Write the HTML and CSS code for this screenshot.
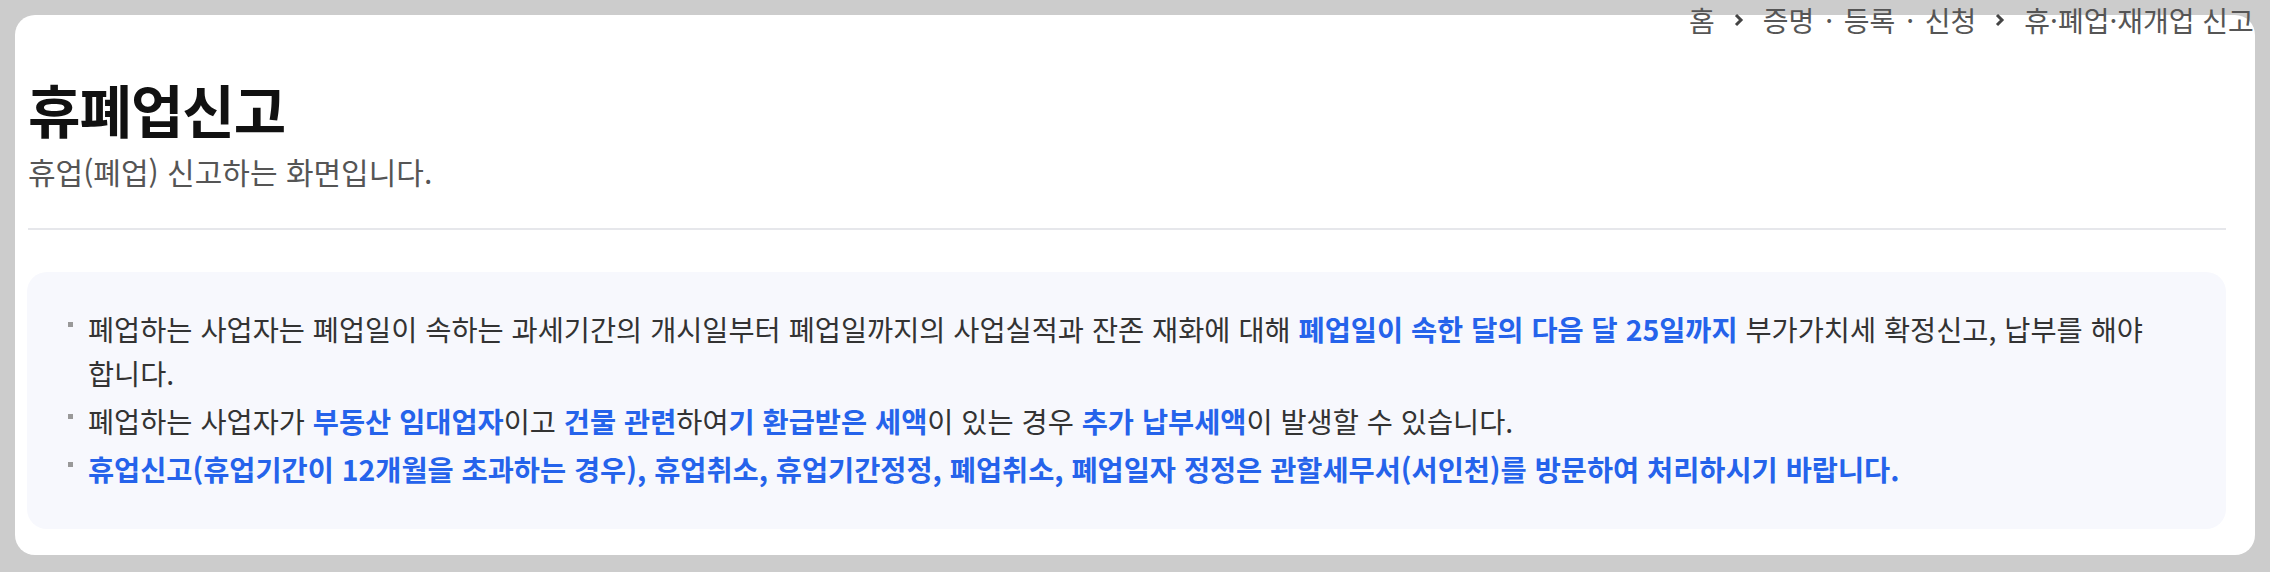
FILE: index.html
```html
<!DOCTYPE html>
<html lang="ko">
<head>
<meta charset="utf-8">
<title>휴폐업신고</title>
<link rel="stylesheet" href="styles.css">
</head>
<body>
<div class="page">
  <section class="card">
    <nav class="breadcrumb">
      <span class="crumb">홈</span>
      <svg class="chev" viewBox="0 0 10 14" width="10" height="14"><polyline points="2,2 7,7 2,12" fill="none" stroke="#444" stroke-width="3"/></svg>
      <span class="crumb crumb-spaced">증명 · 등록 · 신청</span>
      <svg class="chev" viewBox="0 0 10 14" width="10" height="14"><polyline points="2,2 7,7 2,12" fill="none" stroke="#444" stroke-width="3"/></svg>
      <span class="crumb">휴·폐업·재개업 신고</span>
      <svg class="chev" viewBox="0 0 10 14" width="10" height="14"><polyline points="2,2 7,7 2,12" fill="none" stroke="#444" stroke-width="3"/></svg>
    </nav>
    <header class="head">
      <h1 class="title">휴폐업신고</h1>
      <p class="subtitle">휴업(폐업) 신고하는 화면입니다.</p>
    </header>
    <hr class="divider">
    <div class="notice">
      <ul class="notice-list">
        <li>폐업하는 사업자는 폐업일이 속하는 과세기간의 개시일부터 폐업일까지의 사업실적과 잔존 재화에 대해 <strong class="em">폐업일이 속한 달의 다음 달 25일까지</strong> 부가가치세 확정신고, 납부를 해야 합니다.</li>
        <li>폐업하는 사업자가 <strong class="em">부동산 임대업자</strong>이고 <strong class="em">건물 관련</strong>하여<strong class="em">기 환급받은 세액</strong>이 있는 경우 <strong class="em">추가 납부세액</strong>이 발생할 수 있습니다.</li>
        <li><strong class="em">휴업신고(휴업기간이 12개월을 초과하는 경우), 휴업취소, 휴업기간정정, 폐업취소, 폐업일자 정정은 관할세무서(서인천)를 방문하여 처리하시기 바랍니다.</strong></li>
      </ul>
    </div>
  </section>
</div>
</body>
</html>
```
FILE: styles.css
```css
html, body {
  margin: 0;
  padding: 0;
  background: #cccccc;
  overflow: hidden;
}
body {
  font-family: "Noto Sans CJK KR", "Noto Sans", sans-serif;
  color: #333;
}
.page {
  padding: 15px 15px 16px 15px;
  width: 2270px;
  box-sizing: border-box;
}
.card {
  position: relative;
  width: 2240px;
  box-sizing: border-box;
  background: #fff;
  border-radius: 20px;
  padding: 61px 29px 26px 12px;
}
.breadcrumb {
  position: absolute;
  top: -15px;
  left: 1674px;
  height: 40px;
  display: flex;
  align-items: center;
  gap: 19px;
  white-space: nowrap;
  font-size: 28px;
  line-height: 40px;
  color: #555;
}
.crumb-spaced {
  word-spacing: 3px;
}
.chev {
  display: block;
  flex: none;
}
.head {
  padding-left: 1px;
}
.title {
  margin: 0;
  font-size: 57px;
  line-height: 65px;
  font-weight: 700;
  color: #111;
  letter-spacing: -1px;
}
.subtitle {
  margin: 10px 0 0 0;
  font-size: 30px;
  line-height: 40px;
  color: #555;
}
.divider {
  margin: 37px 0 0 1px;
  border: 0;
  height: 2px;
  background: #e6e7eb;
}
.notice {
  margin-top: 42px;
  background: #f7f8fd;
  border-radius: 20px;
  padding: 35px 40px 38px 41px;
}
.notice-list {
  list-style: none;
  margin: 0;
  padding: 0;
  font-size: 28.4px;
  line-height: 44px;
  color: #333;
  word-break: keep-all;
}
.notice-list li {
  position: relative;
  padding-left: 20px;
}
.notice-list li + li {
  margin-top: 4px;
}
.notice-list li::before {
  content: "";
  position: absolute;
  left: 0;
  top: 15px;
  width: 5px;
  height: 5px;
  background: #999;
}
.em {
  color: #2563eb;
  font-weight: 700;
}
```
